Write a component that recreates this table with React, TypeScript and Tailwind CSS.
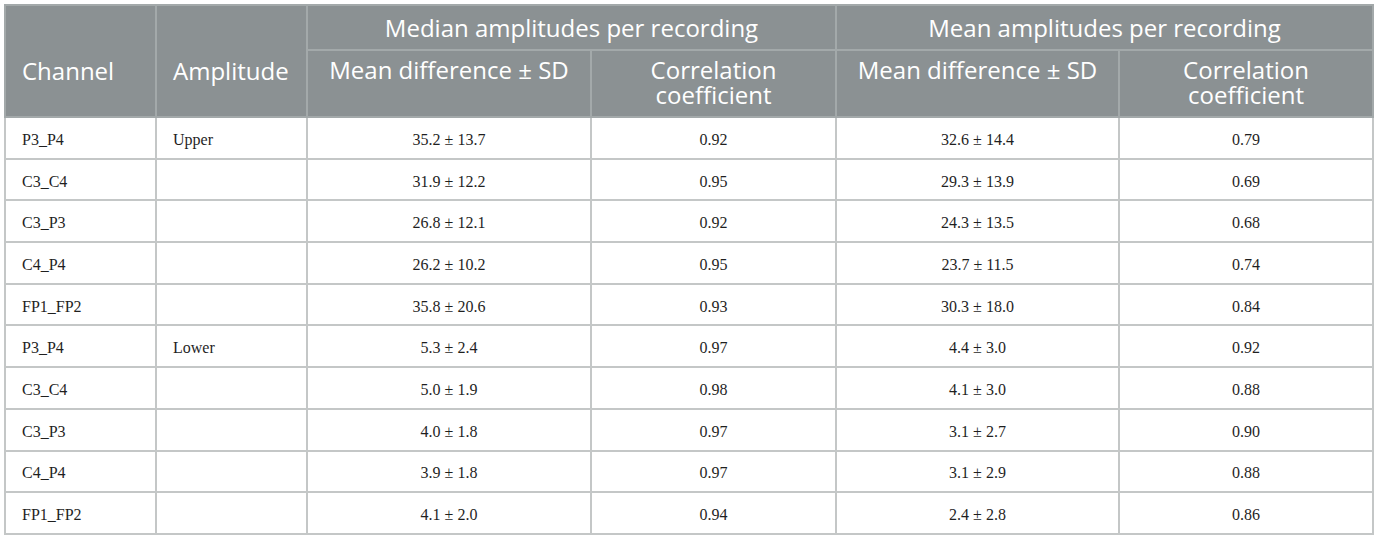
const ROWS = [
  ["P3_P4", "Upper", "35.2 ± 13.7", "0.92", "32.6 ± 14.4", "0.79"],
  ["C3_C4", "", "31.9 ± 12.2", "0.95", "29.3 ± 13.9", "0.69"],
  ["C3_P3", "", "26.8 ± 12.1", "0.92", "24.3 ± 13.5", "0.68"],
  ["C4_P4", "", "26.2 ± 10.2", "0.95", "23.7 ± 11.5", "0.74"],
  ["FP1_FP2", "", "35.8 ± 20.6", "0.93", "30.3 ± 18.0", "0.84"],
  ["P3_P4", "Lower", "5.3 ± 2.4", "0.97", "4.4 ± 3.0", "0.92"],
  ["C3_C4", "", "5.0 ± 1.9", "0.98", "4.1 ± 3.0", "0.88"],
  ["C3_P3", "", "4.0 ± 1.8", "0.97", "3.1 ± 2.7", "0.90"],
  ["C4_P4", "", "3.9 ± 1.8", "0.97", "3.1 ± 2.9", "0.88"],
  ["FP1_FP2", "", "4.1 ± 2.0", "0.94", "2.4 ± 2.8", "0.86"],
];

export default function App() {
  return (
    <div className="min-h-screen bg-white p-[4px]">
      <table className="w-[1368px] table-fixed border-collapse border-2 border-[#b7bbbb]">
        <colgroup>
          <col className="w-[151px]" />
          <col className="w-[151px]" />
          <col className="w-[284px]" />
          <col className="w-[245px]" />
          <col className="w-[283px]" />
          <col className="w-[254px]" />
        </colgroup>
        <thead className="bg-[#8b9193] text-white font-['Open_Sans',sans-serif] text-[24px] leading-[25px]">
          <tr className="h-[45px]">
            <th rowSpan={2} className="border-2 border-[#a3a9aa] px-4 pt-[52px] text-left align-top font-normal">
              Channel
            </th>
            <th rowSpan={2} className="border-2 border-[#a3a9aa] px-4 pt-[52px] text-left align-top font-normal">
              Amplitude
            </th>
            <th colSpan={2} className="border-2 border-[#a3a9aa] px-4 text-center font-normal">
              Median amplitudes per recording
            </th>
            <th colSpan={2} className="border-2 border-[#a3a9aa] px-4 text-center font-normal">
              Mean amplitudes per recording
            </th>
          </tr>
          <tr className="h-[67px]">
            <th className="border-2 border-[#a3a9aa] px-2 pt-[6px] align-top text-center font-normal">
              Mean difference ± SD
            </th>
            <th className="border-2 border-[#a3a9aa] px-2 pt-[6px] align-top text-center font-normal">
              Correlation
              <br />
              coefficient
            </th>
            <th className="border-2 border-[#a3a9aa] px-2 pt-[6px] align-top text-center font-normal">
              Mean difference ± SD
            </th>
            <th className="border-2 border-[#a3a9aa] px-2 pt-[6px] align-top text-center font-normal">
              Correlation
              <br />
              coefficient
            </th>
          </tr>
        </thead>
        <tbody className="font-['Liberation_Serif',serif] text-[16px] text-[#1f1f1f]">
          {ROWS.map((row, i) => (
            <tr key={i} className="h-[41.7px]">
              {row.map((cell, j) => (
                <td
                  key={j}
                  className={
                    j < 2
                      ? "border-2 border-[#c4c7c7] px-4 pt-1 text-left align-middle"
                      : "border-2 border-[#c4c7c7] px-4 pt-1 text-center align-middle"
                  }
                >
                  {cell}
                </td>
              ))}
            </tr>
          ))}
        </tbody>
      </table>
    </div>
  );
}
